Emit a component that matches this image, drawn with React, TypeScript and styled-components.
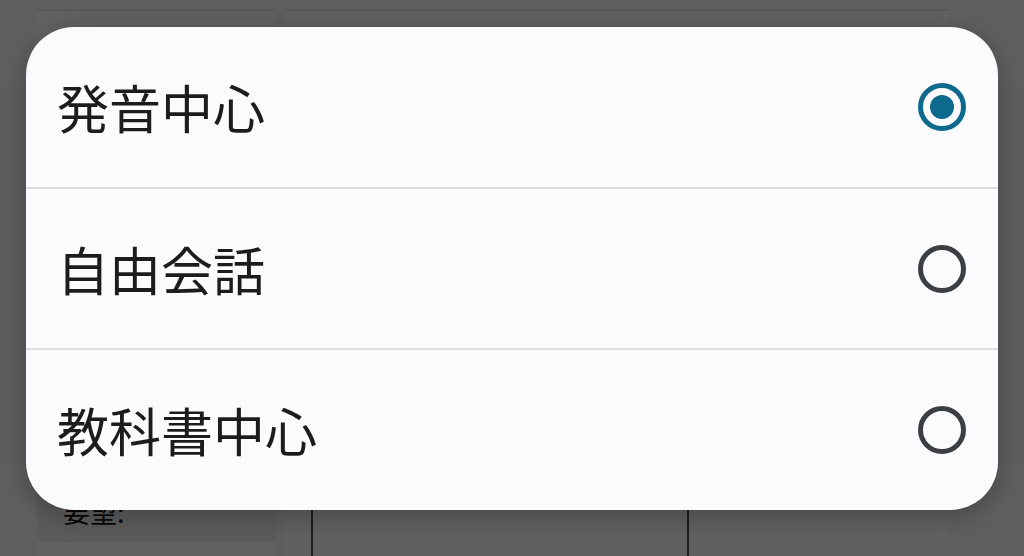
import React, { useState } from 'react';
import styled, { createGlobalStyle } from 'styled-components';

const GlobalStyle = createGlobalStyle`
  html, body {
    margin: 0;
    padding: 0;
    width: 1024px;
    height: 556px;
    overflow: hidden;
    background: #ececec;
    font-family: "Noto Sans CJK JP", "Noto Sans", sans-serif;
  }
`;

// the page that sits behind the dimmed overlay
const Page = styled.div`
  display: grid;
  grid-template-columns: 238px 664px;
  column-gap: 10px;
  padding-left: 37px;
  height: 556px;
  box-sizing: border-box;
`;

const SidePanel = styled.div`
  display: flex;
  flex-direction: column;
  background: #f3f3f3;
`;

const PanelHead = styled.div`
  height: 9px;
  border-bottom: 2px solid #dcdcdc;
  background: #ededed;
`;

const PanelBody = styled.div`
  flex: 1;
  display: flex;
  flex-direction: column;
  justify-content: flex-end;
`;

const NoteBox = styled.div`
  height: 60px;
  margin-bottom: 14px;
  padding: 15px 26px 0;
  background: #e3e3e3;
  font-size: 27px;
  line-height: 30px;
  color: #111;
  box-sizing: border-box;
`;

const MainPanel = styled.div`
  display: flex;
  flex-direction: column;
  background: #f1f1f1;
`;

const TableArea = styled.div`
  flex: 1;
  margin-top: 120px;
  display: grid;
  grid-template-columns: 28px 376px 1fr;
  align-items: stretch;
`;

const TableCol = styled.div<{ $ruled?: boolean }>`
  border-right: ${({ $ruled }) => ($ruled ? '2px solid #4a4a4a' : 'none')};
`;

const Overlay = styled.div`
  position: fixed;
  inset: 0;
  background: rgba(0, 0, 0, 0.6);
  display: flex;
  justify-content: center;
  align-items: flex-start;
  padding-top: 27px;
`;

const Sheet = styled.div`
  width: 972px;
  height: 483px;
  background: #fbfbfd;
  border-radius: 48px;
  display: flex;
  flex-direction: column;
  overflow: hidden;
  box-shadow: 0 6px 28px rgba(0, 0, 0, 0.28);
`;

const OptionRow = styled.label`
  flex: 1;
  display: flex;
  align-items: center;
  justify-content: space-between;
  padding: 0 32px 0 31px;
  cursor: pointer;

  & + & {
    border-top: 2px solid #dddde0;
  }
`;

const OptionText = styled.span`
  font-size: 52px;
  line-height: 1;
  color: #1c1c1f;
`;

const Radio = styled.span<{ $checked: boolean }>`
  position: relative;
  width: 48px;
  height: 48px;
  border-radius: 50%;
  box-sizing: border-box;
  border: 5px solid ${({ $checked }) => ($checked ? '#0d6a8d' : '#3b3f43')};

  &::after {
    content: '';
    position: absolute;
    inset: 7px;
    border-radius: 50%;
    background: #0d6a8d;
    display: ${({ $checked }) => ($checked ? 'block' : 'none')};
  }
`;

const options = ['発音中心', '自由会話', '教科書中心'];

export default function App() {
  const [selected, setSelected] = useState(0);

  return (
    <>
      <GlobalStyle />
      <Page>
        <SidePanel>
          <PanelHead />
          <PanelBody>
            <NoteBox>要望:</NoteBox>
          </PanelBody>
        </SidePanel>
        <MainPanel>
          <PanelHead />
          <TableArea>
            <TableCol $ruled />
            <TableCol $ruled />
            <TableCol />
          </TableArea>
        </MainPanel>
      </Page>
      <Overlay>
        <Sheet>
          {options.map((label, i) => (
            <OptionRow key={label} onClick={() => setSelected(i)}>
              <OptionText>{label}</OptionText>
              <Radio $checked={selected === i} />
            </OptionRow>
          ))}
        </Sheet>
      </Overlay>
    </>
  );
}
